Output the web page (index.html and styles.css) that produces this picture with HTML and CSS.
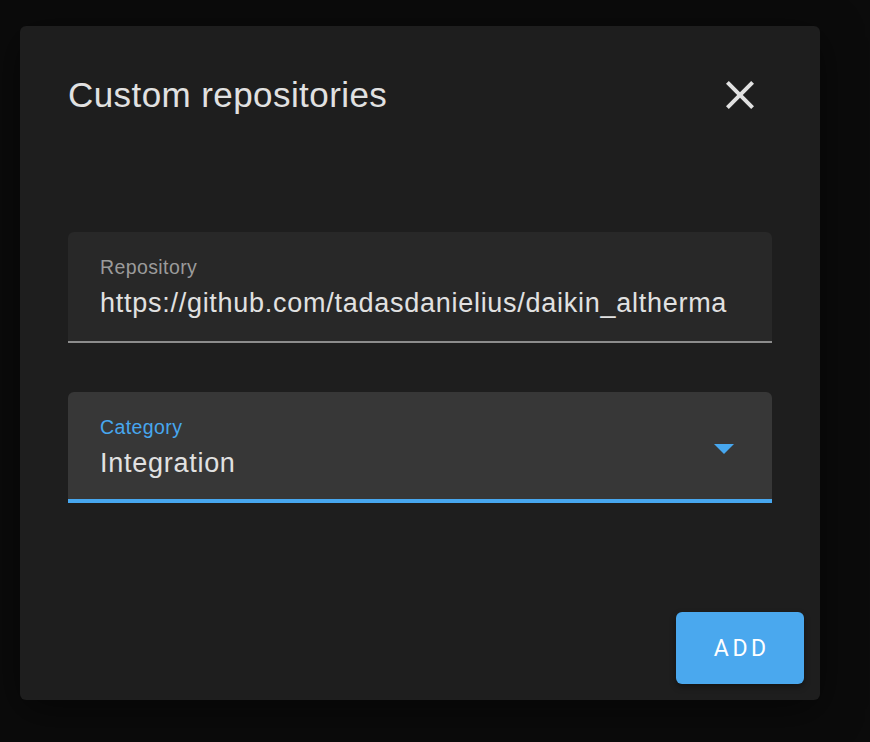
FILE: index.html
```html
<!DOCTYPE html>
<html>
<head>
<meta charset="utf-8">
<link rel="stylesheet" href="styles.css">
</head>
<body>
<div class="dialog">
  <div class="header">
    <h2 class="title">Custom repositories</h2>
    <button class="close" aria-label="Close">
      <svg width="48" height="48" viewBox="0 0 24 24"><path fill="#e1e1e1" d="M19,6.41L17.59,5L12,10.59L6.41,5L5,6.41L10.59,12L5,17.59L6.41,19L12,13.41L17.59,19L19,17.59L13.41,12L19,6.41Z"/></svg>
    </button>
  </div>
  <div class="content">
    <div class="field">
      <div class="label">Repository</div>
      <div class="value">https://github.com/tadasdanielius/daikin_altherma</div>
    </div>
    <div class="field select">
      <div class="select-text">
        <div class="label">Category</div>
        <div class="value">Integration</div>
      </div>
      <svg class="arrow" width="20" height="10" viewBox="0 0 20 10"><path fill="#47a7ef" d="M0 0 L20 0 L10 10 Z"/></svg>
    </div>
  </div>
  <div class="actions">
    <button class="add">ADD</button>
  </div>
</div>
</body>
</html>
```
FILE: styles.css
```css
html, body {
  margin: 0;
  padding: 0;
  background: #0b0b0b;
  width: 870px;
  height: 742px;
  overflow: hidden;
  font-family: "Liberation Sans", Arial, sans-serif;
}
.dialog {
  margin: 26px 0 0 20px;
  width: 800px;
  height: 674px;
  background: #1e1e1e;
  border-radius: 6px;
  box-sizing: border-box;
  display: flex;
  flex-direction: column;
  box-shadow: 0 10px 40px rgba(0,0,0,0.5);
}
.header {
  display: flex;
  align-items: center;
  justify-content: space-between;
  padding: 48px 56px 0 48px;
  height: 42px;
}
.title {
  margin: 0;
  font-weight: 400;
  font-size: 35px;
  color: #e1e1e1;
  letter-spacing: 0.42px;
}
.close {
  background: none;
  border: none;
  padding: 0;
  width: 48px;
  height: 48px;
  display: flex;
  align-items: center;
  justify-content: center;
  cursor: pointer;
}
.content {
  display: flex;
  flex-direction: column;
  gap: 49px;
  padding: 116px 48px 0 48px;
}
.field {
  height: 111px;
  box-sizing: border-box;
  background: #282828;
  border-radius: 6px 6px 0 0;
  border-bottom: 2px solid #8c8c8c;
  padding: 24px 32px 0 32px;
}
.label {
  font-size: 19.5px;
  color: #9b9b9b;
  line-height: 22px;
  letter-spacing: 0.4px;
}
.value {
  font-size: 27px;
  color: #e1e1e1;
  line-height: 30px;
  margin-top: 10px;
  letter-spacing: 0.73px;
}
.select {
  background: #373737;
  border-bottom: 4px solid #47a7ef;
  display: flex;
  justify-content: space-between;
  align-items: flex-start;
}
.select .label {
  color: #47a7ef;
}
.arrow {
  margin-top: 28px;
  margin-right: 6px;
}
.actions {
  margin-top: auto;
  display: flex;
  justify-content: flex-end;
  padding: 0 16px 16px 0;
}
.add {
  width: 128px;
  height: 72px;
  background: #4aa8ee;
  border: none;
  border-radius: 6px;
  color: #ffffff;
  font-family: "Roboto", "Liberation Sans", sans-serif;
  font-size: 23px;
  font-weight: 400;
  letter-spacing: 3.6px;
  text-indent: 3.6px;
  box-shadow: 0 3px 6px rgba(0,0,0,0.35);
  padding: 0;
}
```
